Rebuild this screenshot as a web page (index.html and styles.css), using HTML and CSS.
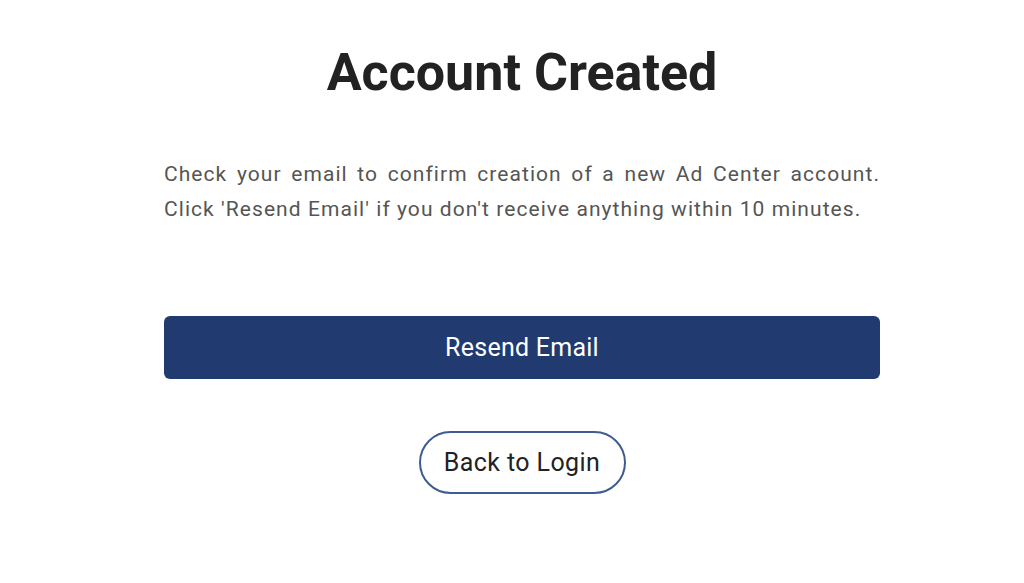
FILE: index.html
```html
<!DOCTYPE html>
<html lang="en">
<head>
<meta charset="utf-8">
<title>Account Created</title>
<link rel="stylesheet" href="styles.css">
</head>
<body>
<main class="page">
  <section class="card">
    <h1 class="title">Account Created</h1>
    <p class="message">Check your email to confirm creation of a new Ad Center account. Click 'Resend Email' if you don't receive anything within 10 minutes.</p>
    <button class="btn-primary" type="button">Resend Email</button>
    <button class="btn-outline" type="button">Back to Login</button>
  </section>
</main>
</body>
</html>
```
FILE: styles.css
```css
html, body {
  margin: 0;
  padding: 0;
  background: #ffffff;
}
.page {
  padding-left: 20px;
  display: flex;
  justify-content: center;
}
.card {
  width: 716px;
  display: flex;
  flex-direction: column;
  align-items: center;
}
.title {
  margin: 41px 0 0;
  font-family: Roboto, "Liberation Sans", sans-serif;
  font-weight: 700;
  font-size: 52px;
  line-height: 64px;
  color: #222222;
}
.message {
  margin: 52px 0 0;
  align-self: stretch;
  font-family: Roboto, "Liberation Sans", sans-serif;
  font-size: 21px;
  letter-spacing: 1.06px;
  line-height: 35px;
  color: #555555;
  text-align: justify;
}
.btn-primary {
  margin-top: 89px;
  align-self: stretch;
  height: 63px;
  border: none;
  border-radius: 6px;
  background: #213a6f;
  color: #ffffff;
  font-family: Roboto, "Liberation Sans", sans-serif;
  font-size: 25px;
  letter-spacing: 0.25px;
  cursor: pointer;
}
.btn-outline {
  margin-top: 52px;
  width: 207px;
  height: 63px;
  border: 2px solid #3e5c92;
  border-radius: 32px;
  background: #ffffff;
  color: #222222;
  font-family: Roboto, "Liberation Sans", sans-serif;
  font-size: 25px;
  letter-spacing: 0.4px;
  cursor: pointer;
}
```
